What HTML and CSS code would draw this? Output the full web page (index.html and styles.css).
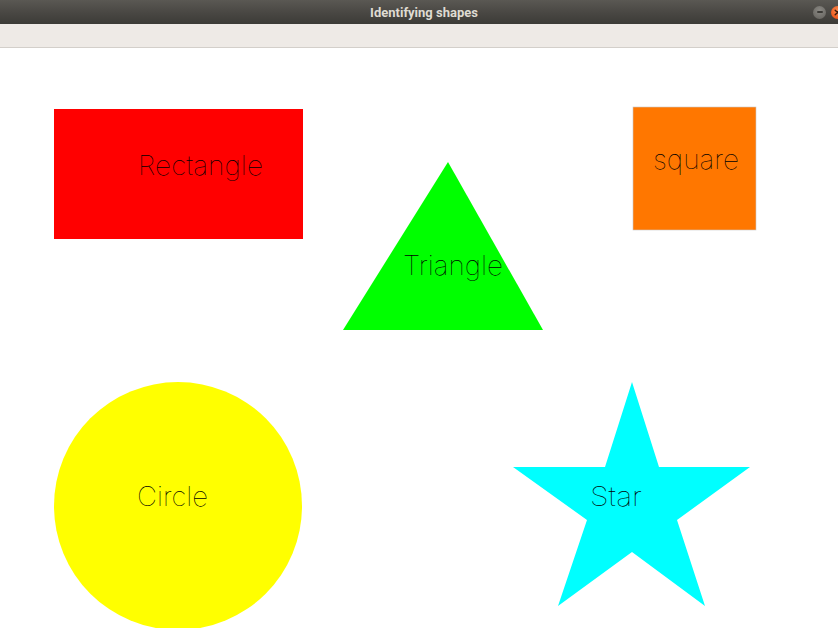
FILE: index.html
```html
<!DOCTYPE html>
<html lang="en">
<head>
<meta charset="utf-8">
<title>Identifying shapes</title>
<link rel="stylesheet" href="styles.css">
</head>
<body>
<div class="window">
  <header class="titlebar">
    <span class="spacer"></span>
    <span class="title">Identifying shapes</span>
    <div class="controls">
      <span class="btn btn-min"><span class="dash"></span></span>
      <span class="btn btn-close">
        <svg viewBox="0 0 13 13" width="13" height="13"><path d="M4.2 4.2 L8.8 8.8 M8.8 4.2 L4.2 8.8" stroke="#3a1a0c" stroke-width="1.4" stroke-linecap="round"/></svg>
      </span>
    </div>
  </header>
  <div class="toolbar"></div>
  <main class="canvas">
    <svg class="shapes" viewBox="0 48 838 580" width="838" height="580">
      <rect x="54" y="109" width="249" height="130" fill="#ff0000"/>
      <text class="label" x="138" y="175" textLength="125" lengthAdjust="spacingAndGlyphs">Rectangle</text>

      <polygon points="448,162 343,330 543,330" fill="#00ff00"/>
      <text class="label" x="403" y="275" textLength="100" lengthAdjust="spacingAndGlyphs">Triangle</text>

      <rect x="633" y="107" width="123" height="123" fill="#ff7700" stroke="#c8c8c8" stroke-width="0.6"/>
      <text class="label" x="653" y="169" textLength="86" lengthAdjust="spacingAndGlyphs">square</text>

      <circle cx="178" cy="506" r="124" fill="#ffff00"/>
      <text class="label" x="137" y="506" textLength="71" lengthAdjust="spacingAndGlyphs">Circle</text>

      <polygon points="632,382 659,467 750,467 677,520 705,606 632,552 558,606 587,520 513,467 605,467" fill="#00ffff"/>
      <text class="label" x="590" y="506" textLength="52" lengthAdjust="spacingAndGlyphs">Star</text>
    </svg>
  </main>
</div>
</body>
</html>
```

FILE: styles.css
```css
html, body {
  margin: 0;
  padding: 0;
  background: #ffffff;
  overflow: hidden;
}

.window {
  width: 838px;
  height: 628px;
  display: flex;
  flex-direction: column;
  overflow: hidden;
}

.titlebar {
  height: 24px;
  flex: 0 0 24px;
  display: grid;
  grid-template-columns: 1fr auto 1fr;
  align-items: center;
  padding-left: 10px;
  background: linear-gradient(to bottom, #5a5853 0%, #4a4844 50%, #3c3b37 100%);
  overflow: hidden;
}

.title {
  font-family: "Roboto", "DejaVu Sans", sans-serif;
  font-weight: 700;
  font-size: 13px;
  letter-spacing: 0;
  color: #dfdbd2;
  white-space: nowrap;
}

.controls {
  justify-self: end;
  display: flex;
  align-items: center;
  gap: 5px;
  margin-right: -6px;
}

.btn {
  width: 13px;
  height: 13px;
  border-radius: 50%;
  display: flex;
  align-items: center;
  justify-content: center;
  flex: 0 0 13px;
}

.btn-min {
  background: radial-gradient(circle at 50% 35%, #8b8984 0%, #6e6c67 70%, #5d5b56 100%);
}

.btn-min .dash {
  width: 6px;
  height: 2px;
  background: #3c3b37;
  border-radius: 1px;
}

.btn-close {
  background: radial-gradient(circle at 50% 35%, #f98a4f 0%, #ef5b1f 70%, #d9481a 100%);
}

.toolbar {
  height: 23px;
  flex: 0 0 23px;
  background: #eeeae6;
  border-bottom: 1px solid #d3cfca;
}

.canvas {
  flex: 1 1 auto;
  background: #ffffff;
}

.shapes {
  display: block;
}

.label {
  font-family: "Inter", "DejaVu Sans", sans-serif;
  font-weight: 100;
  font-size: 27.5px;
  fill: #000000;
}
```
